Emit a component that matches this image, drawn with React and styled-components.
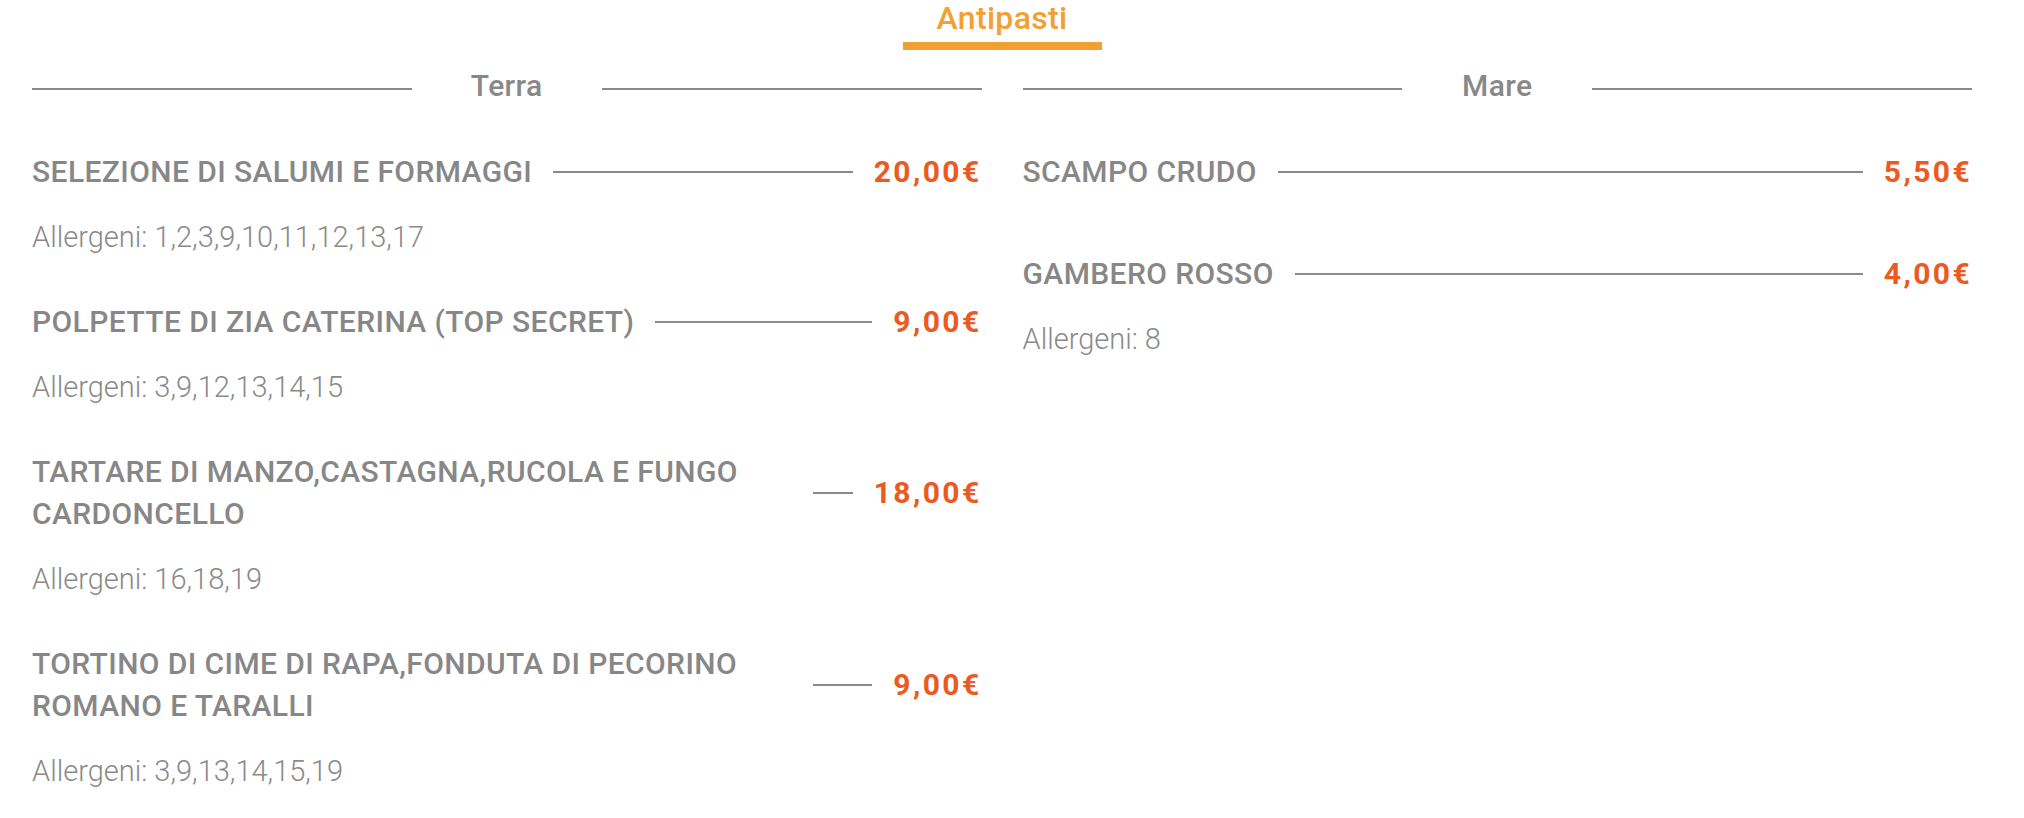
import React from 'react';
import styled, { createGlobalStyle } from 'styled-components';

const menu = [
  {
    title: 'Terra',
    items: [
      { name: 'Selezione di salumi e formaggi', price: '20,00€', allergens: '1,2,3,9,10,11,12,13,17' },
      { name: 'Polpette di zia Caterina (top secret)', price: '9,00€', allergens: '3,9,12,13,14,15' },
      { name: 'Tartare di manzo,castagna,rucola e fungo cardoncello', price: '18,00€', allergens: '16,18,19' },
      { name: 'Tortino di cime di rapa,fonduta di pecorino romano e taralli', price: '9,00€', allergens: '3,9,13,14,15,19' },
    ],
  },
  {
    title: 'Mare',
    items: [
      { name: 'Scampo crudo', price: '5,50€' },
      { name: 'Gambero rosso', price: '4,00€', allergens: '8' },
    ],
  },
];

const App = () => {
  return (
    <Page>
      <GlobalStyle />
      <Heading>
        <HeadingText>Antipasti</HeadingText>
        <HeadingBar />
      </Heading>
      <Columns>
        {menu.map((section) => (
          <Section key={section.title}>
            <SectionHeader>
              <Rule />
              <SectionTitle>{section.title}</SectionTitle>
              <Rule />
            </SectionHeader>
            <List>
              {section.items.map((item) => (
                <Item key={item.name}>
                  <ItemRow>
                    <ItemName>{item.name}</ItemName>
                    <Leader />
                    <Price>{item.price}</Price>
                  </ItemRow>
                  {item.allergens && <Allergens>Allergeni: {item.allergens}</Allergens>}
                </Item>
              ))}
            </List>
          </Section>
        ))}
      </Columns>
    </Page>
  );
};

export default App;

const GlobalStyle = createGlobalStyle`
  body {
    margin: 0;
    background: #fff;
    font-family: Roboto, 'Noto Sans', sans-serif;
  }
`;

const Page = styled.div`
  width: 1940px;
  padding-left: 32px;
`;

const Heading = styled.div`
  display: flex;
  flex-direction: column;
  align-items: center;
`;

const HeadingText = styled.h2`
  margin: 0;
  font-size: 32px;
  line-height: 36px;
  font-weight: 500;
  color: #f2a033;
  letter-spacing: 0.3px;
`;

const HeadingBar = styled.div`
  width: 199px;
  height: 8px;
  margin-top: 6px;
  background: #f2a033;
`;

const Columns = styled.div`
  display: grid;
  grid-template-columns: 1fr 1fr;
  column-gap: 41px;
  margin-top: 18px;
`;

const Section = styled.div`
  display: flex;
  flex-direction: column;
`;

const SectionHeader = styled.div`
  display: flex;
  align-items: center;
`;

const Rule = styled.div`
  flex: 1;
  height: 2px;
  background: #8a8a8a;
`;

const SectionTitle = styled.h3`
  width: 20%;
  margin: 0;
  padding-bottom: 6px;
  text-align: center;
  font-size: 30px;
  line-height: 36px;
  font-weight: 500;
  letter-spacing: 0.4px;
  color: #888;
`;

const List = styled.div`
  margin-top: 30px;
`;

const Item = styled.div`
  margin-bottom: 38px;
`;

const ItemRow = styled.div`
  display: flex;
  align-items: center;
  gap: 21px;
  padding: 11px 0;
`;

const ItemName = styled.h4`
  flex: 0 1 auto;
  max-width: 80%;
  margin: 0;
  font-size: 30px;
  line-height: 42px;
  font-weight: 500;
  letter-spacing: 0.4px;
  text-transform: uppercase;
  color: #878787;
`;

const Leader = styled.div`
  flex: 1 0 30px;
  height: 2px;
  background: #8a8a8a;
`;

const Price = styled.span`
  flex: none;
  font-size: 30px;
  line-height: 42px;
  font-weight: 700;
  letter-spacing: 2.4px;
  color: #ea5a22;
`;

const Allergens = styled.p`
  margin: 18px 0 0;
  font-size: 29px;
  line-height: 30px;
  font-weight: 300;
  color: #8a8a8a;
`;
